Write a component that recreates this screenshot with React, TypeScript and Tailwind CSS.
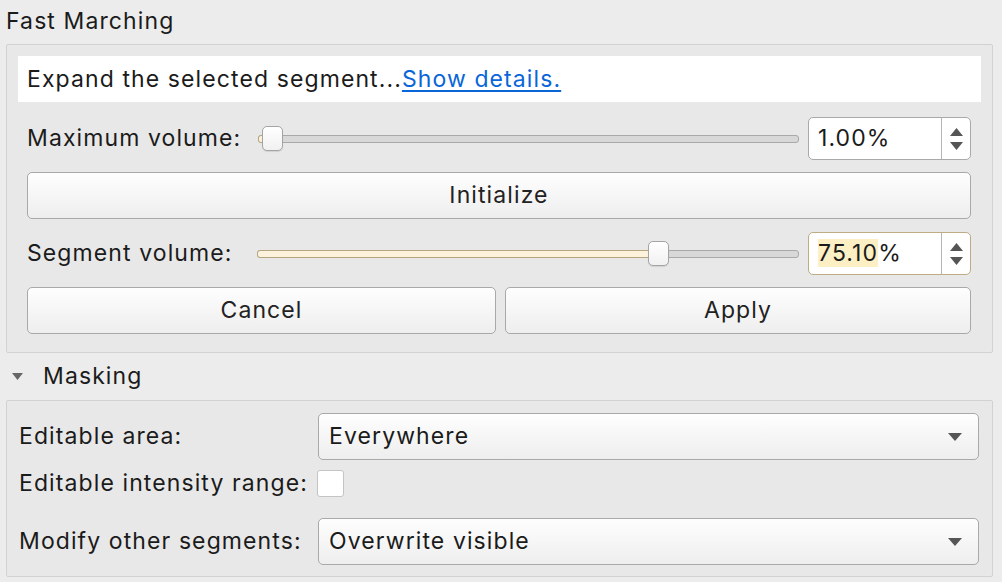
import React from 'react';

const font = { fontFamily: 'Inter, "Noto Sans", "Liberation Sans", sans-serif' };

function Slider({ pct, filled }: { pct: number; filled?: boolean }) {
  return (
    <div className="relative flex-1 h-[26px] flex items-center">
      <div className="w-full h-[8px] rounded-[3px] border border-[#a9a9a9] bg-[#d8d8d8]" />
      <div
        className={
          filled
            ? 'absolute left-0 h-[8px] rounded-[3px] border border-[#b6a57f] bg-[#fdf3dc]'
            : 'absolute left-0 h-[8px] rounded-[3px] border border-[#b6a57f] bg-[#fdf3dc]'
        }
        style={{ width: `calc(${pct}% + 6px)` }}
      />
      <div
        className="absolute top-0 w-[21px] h-[25px] rounded-[5px] border border-[#a4a4a4] bg-gradient-to-b from-white to-[#f1f1f1] shadow-[0_1px_1px_rgba(0,0,0,0.1)]"
        style={{ left: `${pct}%` }}
      />
    </div>
  );
}

function Spin({ value, highlight }: { value: string; highlight?: boolean }) {
  return (
    <div
      className={
        highlight
          ? 'flex w-[163px] h-[43px] rounded-[5px] border border-[#bdac84] bg-white overflow-hidden'
          : 'flex w-[163px] h-[43px] rounded-[5px] border border-[#a9a9a9] bg-white overflow-hidden'
      }
    >
      <div className="flex-1 flex items-center pl-[9px]">
        {highlight ? (
          <span>
            <span className="bg-[#fdefc4]">75.10</span>%
          </span>
        ) : (
          <span>{value}</span>
        )}
      </div>
      <div className="w-[29px] border-l border-[#b5b5b5] flex flex-col items-center justify-center gap-[6px]">
        <svg width="13" height="8" viewBox="0 0 13 8">
          <path d="M6.5 0 L13 8 L0 8 Z" fill="#555" />
        </svg>
        <svg width="13" height="8" viewBox="0 0 13 8">
          <path d="M0 0 L13 0 L6.5 8 Z" fill="#555" />
        </svg>
      </div>
    </div>
  );
}

function Button({ label, className }: { label: string; className?: string }) {
  return (
    <div
      className={
        'h-[47px] flex items-center justify-center rounded-[5px] border border-[#a9a9a9] bg-gradient-to-b from-[#fefefe] to-[#eeeeee] text-[#222] ' +
        (className ?? '')
      }
    >
      {label}
    </div>
  );
}

function Combo({ value }: { value: string }) {
  return (
    <div className="w-[661px] h-[47px] flex items-center justify-between pl-[10px] pr-[16px] rounded-[5px] border border-[#a9a9a9] bg-gradient-to-b from-[#fefefe] to-[#eeeeee]">
      <span>{value}</span>
      <svg width="14" height="8" viewBox="0 0 14 8">
        <path d="M0 0 L14 0 L7 8 Z" fill="#555" />
      </svg>
    </div>
  );
}

export default function App() {
  return (
    <div
      className="w-[1002px] h-[582px] bg-[#ececec] text-[23px] tracking-[1.1px] text-[#1b1b1b] overflow-hidden"
      style={font}
    >
      {/* Fast Marching group */}
      <div className="h-[44px] flex items-center pl-[6px] pb-[2px]">Fast Marching</div>
      <div className="ml-[6px] mr-[9px] h-[309px] border border-[#d2d2d2] bg-[#e8e8e8] rounded-[2px] pt-[11px]">
        <div className="mx-[11px] h-[46px] bg-white flex items-center pl-[9px]">
          Expand the selected segment...
          <span className="text-[#0a66d8] underline underline-offset-[3px]">Show details.</span>
        </div>

        <div className="pl-[20px] pr-[21px]">
          <div className="mt-[15px] flex items-center">
            <div className="w-[231px]">Maximum volume:</div>
            <Slider pct={0.8} />
            <div className="w-[9px]" />
            <Spin value="1.00%" />
          </div>

          <Button label="Initialize" className="mt-[12px]" />

          <div className="mt-[13px] flex items-center">
            <div className="w-[230px]">Segment volume:</div>
            <Slider pct={72.2} filled />
            <div className="w-[9px]" />
            <Spin value="75.10%" highlight />
          </div>

          <div className="mt-[12px] flex gap-[9px]">
            <Button label="Cancel" className="w-[469px]" />
            <Button label="Apply" className="flex-1" />
          </div>
        </div>
      </div>

      {/* Masking header */}
      <div className="h-[47px] flex items-center pl-[12px]">
        <svg width="11" height="7" viewBox="0 0 11 7">
          <path d="M0 0 L11 0 L5.5 7 Z" fill="#666" />
        </svg>
        <span className="ml-[20px]">Masking</span>
      </div>

      {/* Masking group */}
      <div className="ml-[6px] mr-[9px] h-[177px] border border-[#d2d2d2] bg-[#e8e8e8] rounded-[2px] pl-[12px] pr-[13px] pt-[12px]">
        <div className="flex items-center justify-between">
          <span>Editable area:</span>
          <Combo value="Everywhere" />
        </div>
        <div className="mt-[9px] flex items-center h-[28px]">
          <span className="w-[298px] whitespace-nowrap">Editable intensity range:</span>
          <div className="w-[27px] h-[27px] rounded-[3px] border border-[#c4c4c4] bg-white" />
        </div>
        <div className="mt-[21px] flex items-center justify-between">
          <span>Modify other segments:</span>
          <Combo value="Overwrite visible" />
        </div>
      </div>
    </div>
  );
}
